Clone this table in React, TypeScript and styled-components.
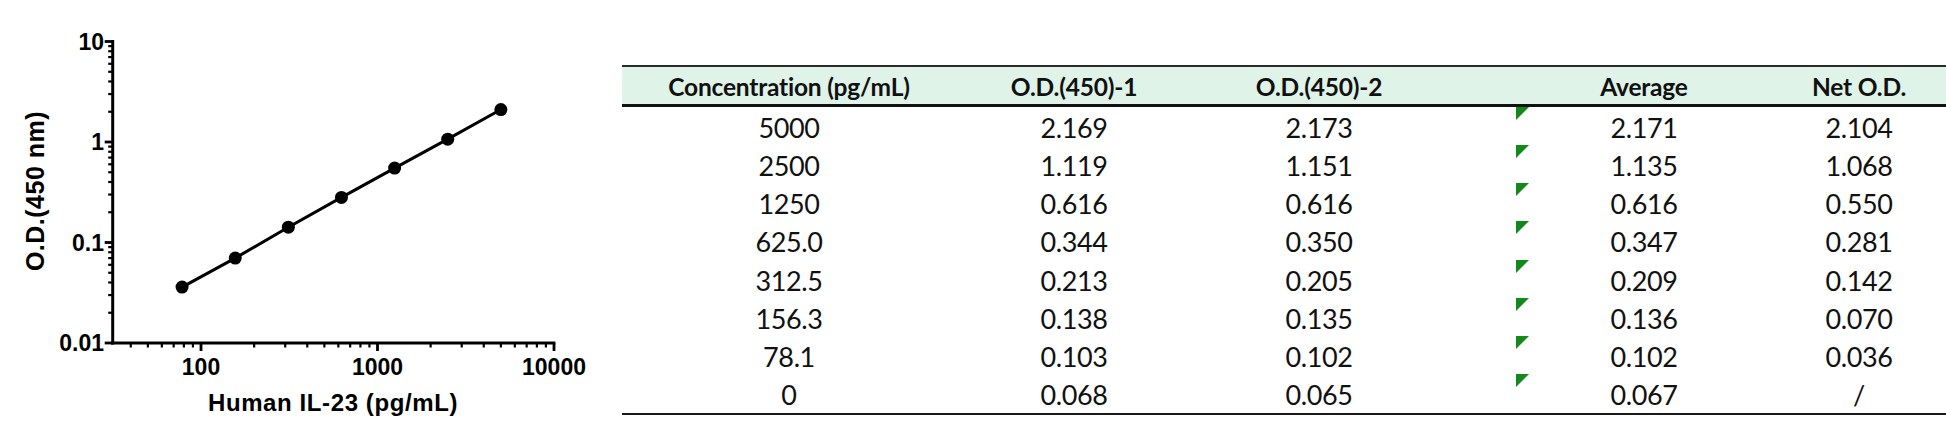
import React from "react";
import styled, { createGlobalStyle } from "styled-components";

const GlobalStyle = createGlobalStyle`
  html, body { margin: 0; padding: 0; background: #ffffff; }
  body { width: 1946px; height: 439px; overflow: hidden; }
`;

const Page = styled.div`
  display: flex;
  flex-direction: row;
  align-items: flex-start;
  width: 1946px;
  height: 439px;
  background: #ffffff;
`;

const ChartBox = styled.div`
  flex: 0 0 622px;
  width: 622px;
  height: 439px;
`;

const TableBox = styled.div`
  flex: 1 1 auto;
  margin-top: 65px;
  font-family: Lato, "Open Sans", "Liberation Sans", sans-serif;
  color: #111111;
  border-bottom: 2px solid #1a1a1a;
`;

const COLS = "334px 236px 254px 70px 256px 1fr";

const HeaderRow = styled.div`
  display: grid;
  grid-template-columns: ${COLS};
  height: 36.5px;
  background: #dff3e8;
  border-top: 2px solid #2a2a2a;
  border-bottom: 3px solid #111111;
`;

const HeaderCell = styled.div`
  display: flex;
  align-items: center;
  justify-content: center;
  padding-top: 3px;
  font-size: 24.5px;
  font-weight: 700;
  letter-spacing: -0.2px;
  white-space: nowrap;
`;

const Row = styled.div`
  display: grid;
  grid-template-columns: ${COLS};
  height: 38.25px;
`;

const Cell = styled.div<{ $flag?: boolean }>`
  position: relative;
  display: flex;
  align-items: center;
  justify-content: center;
  padding-top: 3px;
  font-size: 27px;
  font-weight: 400;
  letter-spacing: -0.4px;
  white-space: nowrap;

  ${(p) =>
    p.$flag
      ? `
    &::before {
      content: "";
      position: absolute;
      left: 0;
      top: 0;
      width: 0;
      height: 0;
      border-top: 13px solid #118a1b;
      border-right: 13px solid transparent;
    }
  `
      : ""}
`;

const rows = [
  ["5000", "2.169", "2.173", "2.171", "2.104"],
  ["2500", "1.119", "1.151", "1.135", "1.068"],
  ["1250", "0.616", "0.616", "0.616", "0.550"],
  ["625.0", "0.344", "0.350", "0.347", "0.281"],
  ["312.5", "0.213", "0.205", "0.209", "0.142"],
  ["156.3", "0.138", "0.135", "0.136", "0.070"],
  ["78.1", "0.103", "0.102", "0.102", "0.036"],
  ["0", "0.068", "0.065", "0.067", "/"],
];

// chart mapping
const X0 = 201;
const XD = 176.5;
const Y0 = 142;
const YD = 100.5;
const xp = (v: number) => X0 + XD * (Math.log10(v) - 2);
const yp = (v: number) => Y0 - YD * Math.log10(v);

const AXIS_X = 112.7;
const AXIS_Y = 343;
const X_END = xp(10000);
const Y_TOP = yp(10);

const points: [number, number][] = [
  [78.1, 0.036],
  [156.3, 0.07],
  [312.5, 0.142],
  [625, 0.281],
  [1250, 0.55],
  [2500, 1.068],
  [5000, 2.104],
];

const tickFont = {
  fontFamily: '"Liberation Sans", Arial, sans-serif',
  fontWeight: 700,
};

function Chart() {
  const yMinor: number[] = [];
  [0.01, 0.1, 1].forEach((d) => {
    for (let k = 2; k <= 9; k++) yMinor.push(d * k);
  });
  const xMinor: number[] = [];
  for (let k = 4; k <= 9; k++) xMinor.push(10 * k);
  [100, 1000].forEach((d) => {
    for (let k = 2; k <= 9; k++) xMinor.push(d * k);
  });
  const yMajor = [10, 1, 0.1, 0.01];
  const yLabels = ["10", "1", "0.1", "0.01"];
  const xMajor = [100, 1000, 10000];
  const path = points
    .map(([c, v], i) => `${i === 0 ? "M" : "L"}${xp(c).toFixed(1)},${yp(v).toFixed(1)}`)
    .join(" ");

  return (
    <svg width="622" height="439" viewBox="0 0 622 439">
      {yMinor.map((v) => (
        <line key={"ym" + v} x1={AXIS_X - 4.5} x2={AXIS_X} y1={yp(v)} y2={yp(v)} stroke="#000" strokeWidth={2.2} />
      ))}
      {yMajor.map((v) => (
        <line key={"yM" + v} x1={AXIS_X - 8} x2={AXIS_X} y1={yp(v)} y2={yp(v)} stroke="#000" strokeWidth={2.8} />
      ))}
      {xMinor.map((v) => (
        <line key={"xm" + v} x1={xp(v)} x2={xp(v)} y1={AXIS_Y} y2={AXIS_Y + 4.5} stroke="#000" strokeWidth={2.2} />
      ))}
      {xMajor.map((v) => (
        <line key={"xM" + v} x1={xp(v)} x2={xp(v)} y1={AXIS_Y} y2={AXIS_Y + 8} stroke="#000" strokeWidth={2.8} />
      ))}
      <line x1={AXIS_X} x2={AXIS_X} y1={Y_TOP - 1.4} y2={AXIS_Y + 1.4} stroke="#000" strokeWidth={3} />
      <line x1={AXIS_X - 1.5} x2={X_END + 1.4} y1={AXIS_Y} y2={AXIS_Y} stroke="#000" strokeWidth={3} />

      {yMajor.map((v, i) => (
        <text key={"yl" + v} x={104} y={yp(v) + 8.2} textAnchor="end" fontSize={23} style={tickFont} fill="#000">
          {yLabels[i]}
        </text>
      ))}
      {xMajor.map((v) => (
        <text key={"xl" + v} x={xp(v)} y={375} textAnchor="middle" fontSize={23} style={tickFont} fill="#000">
          {String(v)}
        </text>
      ))}

      <text x={333} y={411} textAnchor="middle" fontSize={24} letterSpacing={0.6} style={tickFont} fill="#000">
        Human IL-23 (pg/mL)
      </text>
      <text
        x={43.5}
        y={191}
        textAnchor="middle"
        fontSize={25}
        letterSpacing={0.5}
        style={tickFont}
        fill="#000"
        transform="rotate(-90 43.5 191)"
      >
        O.D.(450 nm)
      </text>

      <path d={path} fill="none" stroke="#000" strokeWidth={3} />
      {points.map(([c, v]) => (
        <circle key={"p" + c} cx={xp(c)} cy={yp(v)} r={6.5} fill="#000" />
      ))}
    </svg>
  );
}

export default function App() {
  return (
    <>
      <GlobalStyle />
      <Page>
        <ChartBox>
          <Chart />
        </ChartBox>
        <TableBox>
          <HeaderRow>
            <HeaderCell>Concentration (pg/mL)</HeaderCell>
            <HeaderCell>O.D.(450)-1</HeaderCell>
            <HeaderCell>O.D.(450)-2</HeaderCell>
            <HeaderCell />
            <HeaderCell>Average</HeaderCell>
            <HeaderCell>Net O.D.</HeaderCell>
          </HeaderRow>
          {rows.map((r) => (
            <Row key={r[0]}>
              <Cell>{r[0]}</Cell>
              <Cell>{r[1]}</Cell>
              <Cell>{r[2]}</Cell>
              <Cell />
              <Cell $flag>{r[3]}</Cell>
              <Cell>{r[4]}</Cell>
            </Row>
          ))}
        </TableBox>
      </Page>
    </>
  );
}
